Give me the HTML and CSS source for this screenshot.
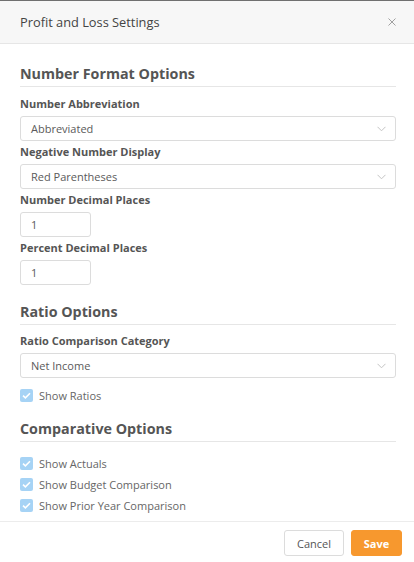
FILE: index.html
```html
<!DOCTYPE html>
<html>
<head>
<meta charset="utf-8">
<link rel="stylesheet" href="styles.css">
</head>
<body>
<div class="modal">
  <div class="modal-header">
    <span class="modal-title">Profit and Loss Settings</span>
    <svg class="close" width="10" height="10" viewBox="0 0 10 10"><path d="M1.5 1.5L8.5 8.5M8.5 1.5L1.5 8.5" stroke="#a0a0a0" stroke-width="1" fill="none"/></svg>
  </div>
  <div class="modal-body">
    <div class="section">
      <div class="section-title">Number Format Options</div>
      <div class="field">
        <div class="label">Number Abbreviation</div>
        <div class="select"><span>Abbreviated</span><svg class="chev" width="9" height="6" viewBox="0 0 9 6"><path d="M0.5 0.8L4.5 4.8L8.5 0.8" stroke="#c4c4c4" stroke-width="1" fill="none"/></svg></div>
      </div>
      <div class="field">
        <div class="label">Negative Number Display</div>
        <div class="select"><span>Red Parentheses</span><svg class="chev" width="9" height="6" viewBox="0 0 9 6"><path d="M0.5 0.8L4.5 4.8L8.5 0.8" stroke="#c4c4c4" stroke-width="1" fill="none"/></svg></div>
      </div>
      <div class="field">
        <div class="label">Number Decimal Places</div>
        <div class="input">1</div>
      </div>
      <div class="field">
        <div class="label">Percent Decimal Places</div>
        <div class="input">1</div>
      </div>
    </div>
    <div class="section section-ratio">
      <div class="section-title">Ratio Options</div>
      <div class="field field-ratio">
        <div class="label">Ratio Comparison Category</div>
        <div class="select"><span>Net Income</span><svg class="chev" width="9" height="6" viewBox="0 0 9 6"><path d="M0.5 0.8L4.5 4.8L8.5 0.8" stroke="#c4c4c4" stroke-width="1" fill="none"/></svg></div>
      </div>
      <div class="checks checks-ratio">
        <div class="check"><span class="box"><svg width="9" height="7" viewBox="0 0 9 7"><path d="M1 3.6L3.4 5.8L8 1.2" stroke="#fff" stroke-width="1.6" fill="none"/></svg></span>Show Ratios</div>
      </div>
    </div>
    <div class="section section-comp">
      <div class="section-title">Comparative Options</div>
      <div class="checks checks-comp">
        <div class="check"><span class="box"><svg width="9" height="7" viewBox="0 0 9 7"><path d="M1 3.6L3.4 5.8L8 1.2" stroke="#fff" stroke-width="1.6" fill="none"/></svg></span>Show Actuals</div>
        <div class="check"><span class="box"><svg width="9" height="7" viewBox="0 0 9 7"><path d="M1 3.6L3.4 5.8L8 1.2" stroke="#fff" stroke-width="1.6" fill="none"/></svg></span>Show Budget Comparison</div>
        <div class="check"><span class="box"><svg width="9" height="7" viewBox="0 0 9 7"><path d="M1 3.6L3.4 5.8L8 1.2" stroke="#fff" stroke-width="1.6" fill="none"/></svg></span>Show Prior Year Comparison</div>
      </div>
    </div>
  </div>
  <div class="modal-footer">
    <button class="btn btn-cancel">Cancel</button>
    <button class="btn btn-save">Save</button>
  </div>
</div>
</body>
</html>
```
FILE: styles.css
```css
* { box-sizing: border-box; }
html, body { margin: 0; padding: 0; background: #fff; }
body { font-family: "Open Sans", "Noto Sans", sans-serif; color: #555; }
.modal { width: 414px; height: 562px; display: flex; flex-direction: column; border-top: 1px solid #707070; }
.modal-header {
  height: 43px;
  background: #f7f7f7;
  border-bottom: 1px solid #e6e6e6;
  display: flex;
  align-items: center;
  justify-content: space-between;
  padding: 0 17px 0 20px;
}
.modal-title { font-size: 12.8px; color: #444; }
.close { display: block; }
.modal-body { padding: 0 18px 0 20px; flex: 1; }
.section-title {
  font-size: 14.3px;
  font-weight: 700;
  line-height: 20px;
  color: #555;
  padding-bottom: 2px;
  border-bottom: 1px solid #e6e6e6;
}
.section { margin-top: 20px; }
.section-ratio { margin-top: 17px; }
.section-comp { margin-top: 14px; }
.section-title + .field { margin-top: 9px; }
.section-title + .field-ratio { margin-top: 8px; }
.field + .field { margin-top: 3px; }
.label { font-size: 11px; font-weight: 700; line-height: 16px; color: #555; margin-bottom: 4px; }
.select {
  height: 25px;
  border: 1px solid #dcdcdc;
  border-radius: 3px;
  display: flex;
  align-items: center;
  justify-content: space-between;
  padding: 0 9px 0 10px;
  font-size: 11px;
  color: #5a5a5a;
}
.chev { display: block; }
.input {
  width: 71px;
  height: 25px;
  border: 1px solid #dcdcdc;
  border-radius: 3px;
  display: flex;
  align-items: center;
  padding: 0 10px;
  font-size: 11px;
  color: #5a5a5a;
}
.checks { display: flex; flex-direction: column; gap: 1px; }
.checks-ratio { margin-top: 7px; }
.checks-comp { margin-top: 11px; }
.check { height: 20px; display: flex; align-items: center; font-size: 11px; color: #666; }
.box {
  width: 13px;
  height: 13px;
  border-radius: 2px;
  background: #a6d3f5;
  display: flex;
  align-items: center;
  justify-content: center;
  margin-right: 6px;
}
.box svg { display: block; }
.modal-footer {
  border-top: 1px solid #ececec;
  height: 41px;
  display: flex;
  justify-content: flex-end;
  align-items: flex-start;
  gap: 7px;
  padding: 8px 12px 0 0;
}
.btn {
  height: 26px;
  border-radius: 3px;
  font-family: "Open Sans", "Noto Sans", sans-serif;
  font-size: 11px;
  padding: 0;
  cursor: pointer;
}
.btn-cancel { width: 60px; background: #fff; border: 1px solid #dcdcdc; color: #555; }
.btn-save { width: 51px; background: #f7982e; border: 1px solid #f7982e; color: #fff; font-weight: 700; }
```
